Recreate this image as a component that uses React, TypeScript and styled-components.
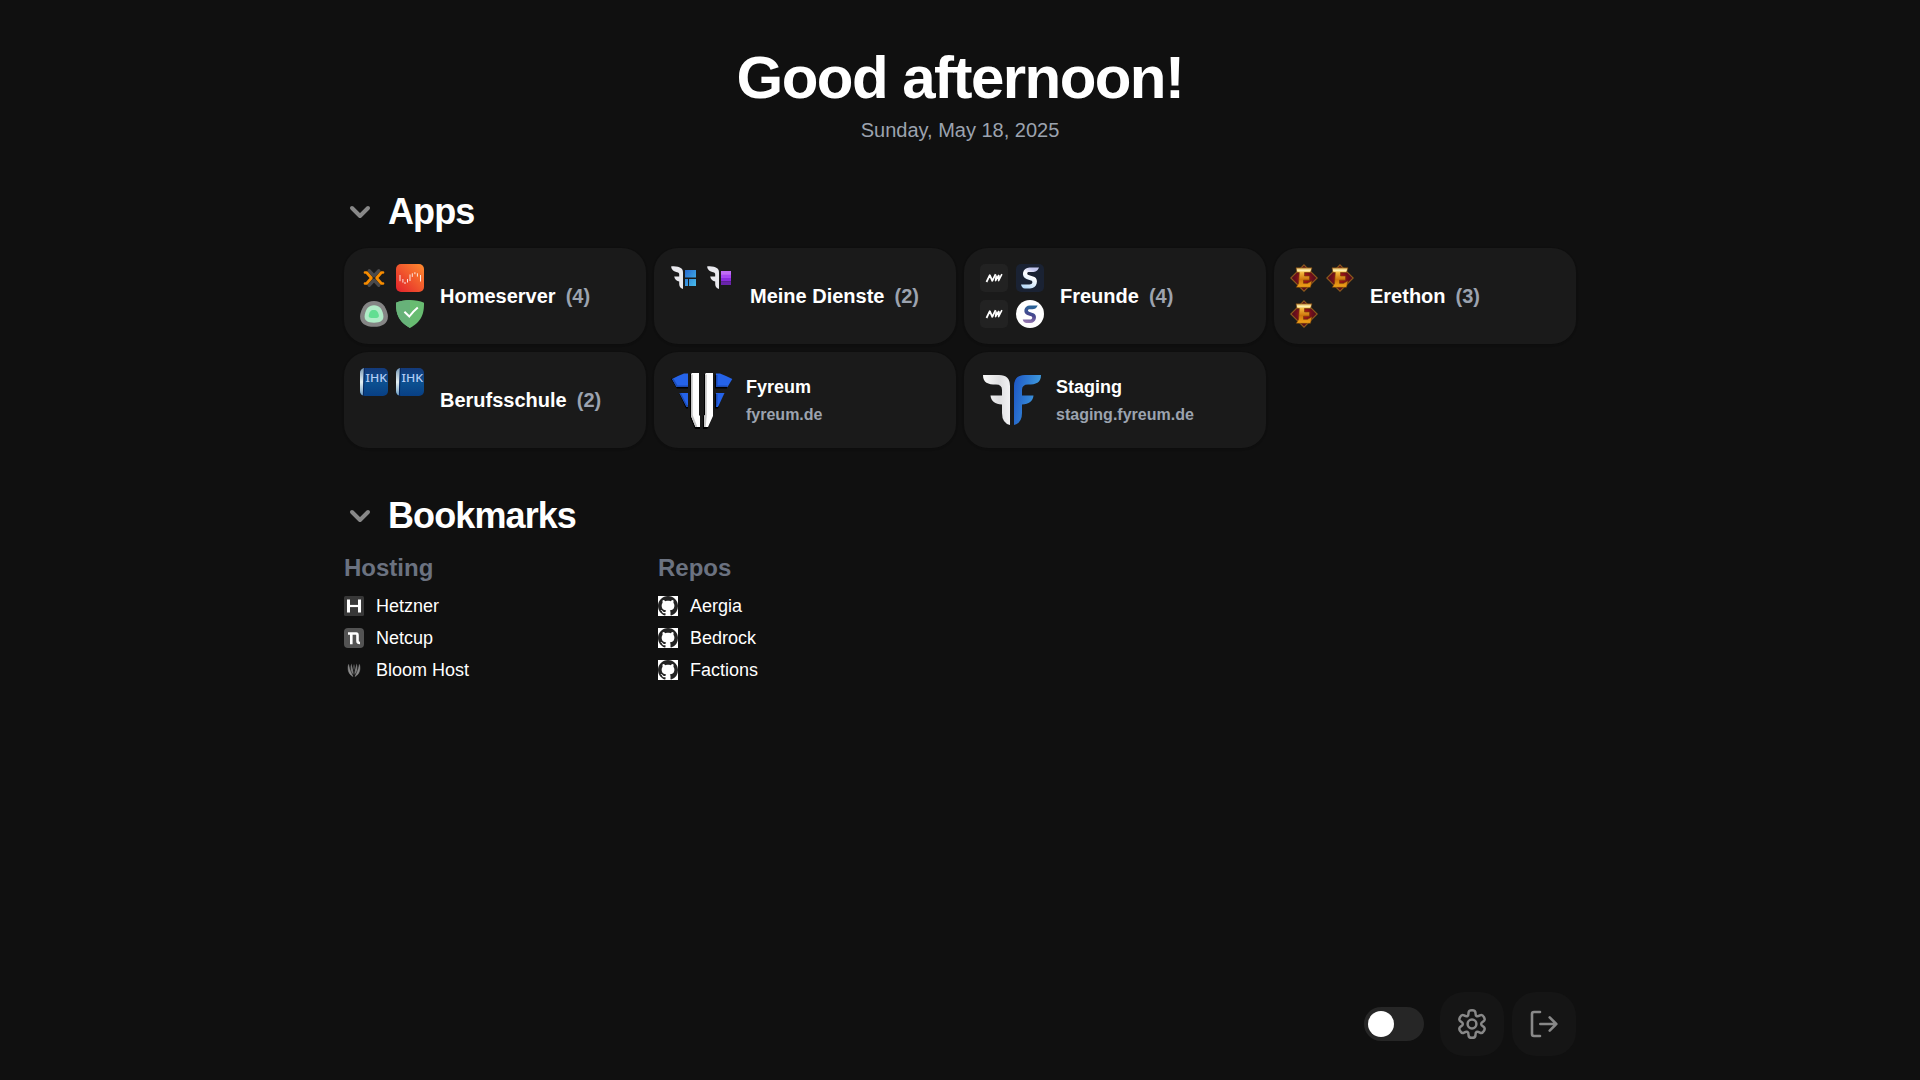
import React from "react";
import styled, { createGlobalStyle } from "styled-components";

const GlobalStyle = createGlobalStyle`
  *, *::before, *::after { box-sizing: border-box; }
  body {
    margin: 0;
    background: #101010;
    color: #ffffff;
    font-family: "Liberation Sans", Arial, sans-serif;
  }
  h1, h2, h3, p, ul { margin: 0; padding: 0; }
  svg { display: block; flex-shrink: 0; }
`;

const Page = styled.div`
  display: flex;
  flex-direction: column;
  width: 1280px;
  height: 1080px;
  margin: 0 auto;
  padding: 48px 24px 24px;
`;

const Header = styled.header`
  display: flex;
  flex-direction: column;
  align-items: center;
  gap: 8px;
`;

const Greeting = styled.h1`
  font-size: 60px;
  line-height: 60px;
  font-weight: 700;
  letter-spacing: -1.54px;
`;

const Today = styled.p`
  font-size: 20px;
  line-height: 28px;
  color: #9ca3af;
`;

const Section = styled.section<{ $top: number }>`
  margin-top: ${(p) => p.$top}px;
`;

const SectionTitle = styled.h2`
  display: flex;
  align-items: center;
  gap: 12px;
  height: 40px;
  font-size: 36px;
  line-height: 40px;
  font-weight: 700;
  letter-spacing: -0.9px;
`;

const CardGrid = styled.div`
  display: grid;
  grid-template-columns: repeat(4, 1fr);
  gap: 8px;
  margin-top: 16px;
`;

const Card = styled.div<{ $gap: number }>`
  display: flex;
  align-items: center;
  gap: ${(p) => p.$gap}px;
  height: 96px;
  padding: 16px;
  border-radius: 24px;
  background: #1a1a1a;
  box-shadow: 0 1px 3px rgba(0, 0, 0, 0.1), 0 1px 2px rgba(0, 0, 0, 0.1);
`;

const IconGrid = styled.div`
  display: grid;
  grid-template-columns: 28px 28px;
  grid-template-rows: 28px 28px;
  gap: 8px;
  width: 64px;
  height: 64px;
`;

const FolderName = styled.h3`
  display: flex;
  gap: 10px;
  font-size: 20px;
  line-height: 28px;
  font-weight: 700;
`;

const Count = styled.span`
  color: #9ca3af;
`;

const AppText = styled.div`
  display: flex;
  flex-direction: column;
  padding-top: 2px;
`;

const AppName = styled.h3`
  font-size: 18px;
  line-height: 28px;
  font-weight: 700;
`;

const AppHost = styled.p`
  font-size: 16px;
  line-height: 28px;
  font-weight: 700;
  color: #9ca3af;
`;

const BookmarkGrid = styled.div`
  display: grid;
  grid-template-columns: repeat(4, 1fr);
  gap: 24px;
  margin-top: 16px;
`;

const BookmarkTitle = styled.h3`
  font-size: 24px;
  line-height: 32px;
  font-weight: 700;
  color: #6b7280;
`;

const BookmarkList = styled.ul`
  display: flex;
  flex-direction: column;
  gap: 4px;
  margin-top: 8px;
  list-style: none;
`;

const Bookmark = styled.li`
  display: flex;
  align-items: center;
  gap: 12px;
  font-size: 18px;
  line-height: 28px;
`;

const Footer = styled.footer`
  display: flex;
  align-items: center;
  justify-content: flex-end;
  gap: 8px;
  margin-top: auto;
`;

const Toggle = styled.div`
  width: 60px;
  height: 34px;
  margin-right: 8px;
  padding: 4px;
  border-radius: 17px;
  background: #262626;
`;

const Knob = styled.div`
  width: 26px;
  height: 26px;
  border-radius: 50%;
  background: #ffffff;
`;

const RoundButton = styled.button`
  display: flex;
  align-items: center;
  justify-content: center;
  width: 64px;
  height: 64px;
  padding: 0;
  border: 0;
  border-radius: 24px;
  background: #151515;
  color: #888888;
`;

const ChevronBox = styled.span`
  display: flex;
  justify-content: center;
  width: 32px;
`;

const Chevron = () => (
  <ChevronBox>
    <svg width="22" height="14" viewBox="0 0 22 14" fill="none" stroke="#888" strokeWidth="4" strokeLinecap="round" strokeLinejoin="round">
      <path d="M3 3l8 8 8-8" />
    </svg>
  </ChevronBox>
);

const ProxmoxIcon = () => (
  <svg width="28" height="28" viewBox="0 0 28 28" fill="none" strokeWidth="3.2" strokeLinecap="round" strokeLinejoin="round">
    <path d="M9.200 6.600L14 11.800L18.800 6.600M9.200 21.400L14 16.200L18.800 21.400" stroke="#4a4a4c" />
    <path d="M5 8.500H6.600L11.400 14L6.600 19.500H5M23 8.500H21.400L16.600 14L21.400 19.500H23" stroke="#f78c00" strokeWidth="2.700" />
  </svg>
);

const UnraidIcon = () => (
  <svg width="28" height="28" viewBox="0 0 28 28">
    <defs>
      <linearGradient id="unraid" x1="0" y1="1" x2="1" y2="0">
        <stop offset="0" stopColor="#e2202b" />
        <stop offset="1" stopColor="#ff8c2f" />
      </linearGradient>
    </defs>
    <rect width="28" height="28" rx="5" fill="url(#unraid)" />
    <path d="M4 11v6.200M6.900 15v3.600M9 18v2M11.500 15v3.500M14 10.500v6.500M16.300 9.300v3.600M18.900 8.200v2M21.400 9.300v3.300M24.500 11v6.500" stroke="#fff" strokeWidth="1" opacity="0.85" />
  </svg>
);

const UptimeKumaIcon = () => (
  <svg width="28" height="28" viewBox="0 0 28 28">
    <path d="M14 1C22 1 25.500 6 27.500 13.500C29.500 21.500 24 26.800 14 26.800S-1.500 21.500.5 13.500C2.500 6 6 1 14 1Z" fill="#858585" />
    <path d="M14 5.300C19.500 5.300 22 9 23.200 14.500C24.500 20.500 20.500 22.700 14 22.700S3.500 20.500 4.800 14.500C6 9 8.500 5.300 14 5.300Z" fill="#b0ecc7" />
    <path d="M13.800 10C17 10 18 12 18.800 15C19.200 17.500 18 18 13.800 18S8.300 17.500 8.800 15C9.500 12 10.500 10 13.800 10Z" fill="#62de91" />
  </svg>
);

const AdGuardIcon = () => (
  <svg width="28" height="28" viewBox="0 0 28 28">
    <path d="M14 0C9 0 4 1 0 2.700C0 10 .2 20.500 14 28C27.800 20.500 28 10 28 2.700C24 1 19 0 14 0Z" fill="#68bc71" />
    <path d="M14 0C9 0 4 1 0 2.700C0 10 .2 20.500 14 28Z" fill="#67b279" />
    <path d="M8.400 11.700L13.300 16.500Q17 11.500 21.800 7.500" fill="none" stroke="#fff" strokeWidth="2" />
  </svg>
);

const WING = "M1 2.500C5 2 9 2.600 11.500 4.500C12.800 5.800 13 7 13 9V25C10.500 24.500 9.200 22.500 9.200 20V17.500C7 17 4.600 15.500 4.200 12.500H9.200V10.500C9.200 9 8.600 8.500 7 8.200C4 7.500 1.500 6 1 2.500Z";

const PanelsIcon = () => (
  <svg width="28" height="28" viewBox="0 0 28 28">
    <defs>
      <linearGradient id="panes" x1="0" y1="0" x2="1" y2="1">
        <stop offset="0" stopColor="#2569d0" />
        <stop offset="1" stopColor="#48bdec" />
      </linearGradient>
    </defs>
    <path d={WING} fill="#e9e9ee" />
    <path d="M15 6H26V13.400H15ZM15 15H18V22H15ZM19 15H26V22H19Z" fill="url(#panes)" />
  </svg>
);

const StackIcon = () => (
  <svg width="28" height="28" viewBox="0 0 28 28">
    <path d={WING} fill="#e9e9ee" />
    <path d="M15 7H25V11H15Z" fill="#c06cf5" />
    <path d="M15 10.700H25V14H15Z" fill="#a747f2" />
    <path d="M15 14H25V17.500H15Z" fill="#8b2bdc" />
    <path d="M15 17.500H25V21H15Z" fill="#6924ab" />
  </svg>
);

const NwIcon = () => (
  <svg width="28" height="28" viewBox="0 0 28 28">
    <rect width="28" height="28" rx="5" fill="#222" />
    <g fill="none" stroke="#fff" strokeLinejoin="round">
      <path d="M6.500 18L9.800 11.200L12.300 16.800L15.600 10.200" strokeWidth="1.800" />
      <path d="M16.200 11.500L15.600 16.600L18.900 10.800M18.900 11.500L18.600 16.600L21.900 10.200" strokeWidth="1.600" />
    </g>
  </svg>
);

const SCURVE = "M23 3.500C21.500 7 19.500 8 16.500 8H13C11 8 10.600 10.300 12.500 11L18.500 13C22.800 15 21.500 24.500 14 24.500H9C6.500 24.500 5.500 22.500 5 20.500H13.500C16.500 20.500 17.500 17.200 15 16.500L10.500 15C4.500 12.700 6.500 3.500 13.500 3.500Z";

const SDarkIcon = () => (
  <svg width="28" height="28" viewBox="0 0 28 28">
    <defs>
      <linearGradient id="sdark" x1="0" y1="1" x2=".5" y2="0">
        <stop offset="0" stopColor="#a9d2f7" />
        <stop offset=".7" stopColor="#ffffff" />
        <stop offset="1" stopColor="#c3c6ee" />
      </linearGradient>
    </defs>
    <rect width="28" height="28" rx="5" fill="#1a2233" />
    <path d={SCURVE} fill="url(#sdark)" />
  </svg>
);

const SLightIcon = () => (
  <svg width="28" height="28" viewBox="0 0 28 28">
    <defs>
      <linearGradient id="slight" x1="0" y1="1" x2=".2" y2="0">
        <stop offset="0" stopColor="#a783b8" />
        <stop offset=".5" stopColor="#49468e" />
        <stop offset="1" stopColor="#2b6397" />
      </linearGradient>
    </defs>
    <circle cx="14" cy="14" r="14" fill="#fff" />
    <path d={SCURVE} fill="url(#slight)" transform="translate(2.600 2.600) scale(.83)" />
  </svg>
);

const ErethonIcon = () => (
  <svg width="28" height="28" viewBox="0 0 28 28">
    <defs>
      <linearGradient id="gold" x1="0" y1="0" x2="0" y2="1">
        <stop offset="0" stopColor="#d9a446" />
        <stop offset=".13" stopColor="#fff3b4" />
        <stop offset=".25" stopColor="#f3b53a" />
        <stop offset=".6" stopColor="#cf760d" />
        <stop offset="1" stopColor="#f2a519" />
      </linearGradient>
      <radialGradient id="ruby">
        <stop offset="0" stopColor="#c81a0c" />
        <stop offset=".6" stopColor="#6d0f1c" />
        <stop offset="1" stopColor="#480d1d" />
      </radialGradient>
    </defs>
    <path d="M14 .8L27.200 14L14 27.200L.8 14Z" fill="url(#ruby)" stroke="#8f5a1c" strokeWidth="1.100" />
    <path d="M6 3.800H22L20.500 8.500H14.500V12H19.500V16.200H13.500V19.300H17.500L22 16.800L20.500 23.300H6.300L8.500 19.500L9.300 8.500H7Z" fill="url(#gold)" stroke="#6e3a0a" strokeWidth=".6" />
  </svg>
);

const IhkLabel = styled.text`
  font: 500 11.5px "Noto Sans", sans-serif;
  fill: #b4cdf5;
`;

const IhkIcon = () => (
  <svg width="28" height="28" viewBox="0 0 28 28">
    <defs>
      <linearGradient id="ihk" x1="0" y1="0" x2="0" y2="1">
        <stop offset="0" stopColor="#143a7a" />
        <stop offset=".55" stopColor="#0c5090" />
        <stop offset="1" stopColor="#083f84" />
      </linearGradient>
      <linearGradient id="spine" x1="0" y1="0" x2="0" y2="1">
        <stop offset="0" stopColor="#7c9bb5" />
        <stop offset=".5" stopColor="#e6f0f2" />
        <stop offset="1" stopColor="#6e9ec2" />
      </linearGradient>
      <clipPath id="ihkClip"><rect width="28" height="28" rx="5" /></clipPath>
    </defs>
    <g clipPath="url(#ihkClip)">
      <rect width="28" height="28" fill="url(#ihk)" />
      <path d="M0 0H4L3 28H0Z" fill="url(#spine)" />
      <path d="M4.300 0L3.300 28" stroke="#08255b" strokeWidth="1" />
      <IhkLabel x="5.500" y="13.500" textLength="21.500" lengthAdjust="spacingAndGlyphs">IHK</IhkLabel>
    </g>
  </svg>
);

const FyreumIcon = () => (
  <svg width="64" height="64" viewBox="0 0 64 64">
    <path d="M1 11L7 20.500H18V19H7L2.500 10ZM9 25L16 40.500H18V39ZM45 7V20.500H57V19H47V8ZM45 26V40.500H48L49 38H46V26ZM20 6V49L25 61H30V59H26L21 48V6ZM34 6V47L33 48V61H37L38.500 59H35V6Z" fill="#000" />
    <path d="M2 11L8 8L14 5.500H18V19H6.500Z" fill="#2563e9" />
    <path d="M62.300 11L56 8L50 5.500H46V19H57.500Z" fill="#2563e9" />
    <path d="M9.500 25H18V39H16.500Z" fill="#2563e9" />
    <path d="M54.500 25H46V39H48Z" fill="#2563e9" />
    <path d="M2 11L6.500 19H18V17.500H7.500L3.500 10.500ZM9.500 25L16.500 39H18V37H17L11 25ZM46 7H47.500V17.500H57.500V19H46ZM46 26H47.500V36L46 39Z" fill="#1d4bb3" />
    <path d="M21 5.500H22L22 5H29V47L30 48V59H25.500L21 48Z" fill="#fff" />
    <path d="M21 6.500H22.700V47L27 58V59H25.500L21 48Z" fill="#c5c5c5" />
    <path d="M35 5.500H36V5H43V48L38 59H34V48L35 47Z" fill="#fff" />
    <path d="M35 6.500H36.700V48L35.700 59H34V48L35 47Z" fill="#c5c5c5" />
  </svg>
);

const StagingIcon = () => (
  <svg width="64" height="64" viewBox="0 0 64 64">
    <defs>
      <linearGradient id="silver" x1="0" y1="0" x2="1" y2="0">
        <stop offset="0" stopColor="#fafafa" />
        <stop offset=".6" stopColor="#dedee0" />
        <stop offset="1" stopColor="#f2f2f4" />
      </linearGradient>
      <linearGradient id="azure" x1="0" y1="0" x2="1" y2=".3">
        <stop offset="0" stopColor="#1d55c4" />
        <stop offset="1" stopColor="#409edf" />
      </linearGradient>
    </defs>
    <path d="M3 7H19Q30 7 30 18V57Q22 55 22 45V36.500C15 36.500 11 33 10.500 27.500H22V22Q22 16.500 16 16.500C8 16.500 3 15 3 7Z" fill="url(#silver)" />
    <path d="M61 7H45Q34 7 34 18V57Q42 55 42 45V36.500C49 36.500 53 33 53.500 27.500H42V22Q42 16.500 48 16.500C56 16.500 61 15 61 7Z" fill="url(#azure)" />
  </svg>
);

const HetznerIcon = () => (
  <svg width="20" height="20" viewBox="0 0 20 20">
    <rect width="20" height="20" rx="1.500" fill="#383838" />
    <path d="M4.500 3.500V16.500M15.500 3.500V16.500" stroke="#fff" strokeWidth="3" />
    <path d="M4.600 10H15.400" stroke="#fff" strokeWidth="2.200" />
  </svg>
);

const NetcupIcon = () => (
  <svg width="20" height="20" viewBox="0 0 20 20">
    <rect width="20" height="20" rx="4" fill="#535353" />
    <path d="M4 5.500H12.300Q13.500 5.500 13.500 7.500V13Q13.500 15 16 15M7.300 6V16.300" fill="none" stroke="#fff" strokeWidth="2.600" />
  </svg>
);

const BloomIcon = () => (
  <svg width="20" height="20" viewBox="0 0 20 20">
    <path d="M4.600 4.500C3.200 9 4.500 14.500 9 16.500C7.500 13 5.500 10 4.600 4.500ZM15.400 4.500C16.800 9 15.500 14.500 11 16.500C12.500 13 14.500 10 15.400 4.500Z" fill="#8d8d8d" stroke="#8d8d8d" strokeWidth=".5" />
    <path d="M7.300 3.500C5.800 8 7 12.500 9.500 14.800C9.700 11 8.500 8 7.300 3.500ZM12.700 3.500C14.200 8 13 12.500 10.500 14.800C10.300 11 11.500 8 12.700 3.500Z" fill="#777" />
    <path d="M10 4C8.800 6 9 8 10 10.500C11 8 11.200 6 10 4Z" fill="#555" />
  </svg>
);

const GithubIcon = () => (
  <svg width="20" height="20" viewBox="0 0 16 16">
    <rect width="16" height="16" fill="#fff" />
    <path fill="#222" d="M8 0C3.580 0 0 3.580 0 8c0 3.540 2.290 6.530 5.470 7.590.4.070.55-.17.55-.38 0-.19-.01-.82-.01-1.490-2.010.37-2.530-.49-2.690-.94-.09-.23-.48-.94-.82-1.130-.28-.15-.68-.52-.01-.53.63-.01 1.080.58 1.230.82.72 1.210 1.870.87 2.330.66.07-.52.28-.87.51-1.070-1.780-.2-3.640-.89-3.640-3.950 0-.87.31-1.590.82-2.150-.08-.2-.36-1.020.08-2.120 0 0 .67-.21 2.200.82.64-.18 1.320-.27 2-.27s1.360.09 2 .27c1.530-1.040 2.200-.82 2.200-.82.44 1.100.16 1.920.08 2.120.51.56.82 1.270.82 2.150 0 3.070-1.870 3.750-3.650 3.950.29.25.54.73.54 1.480 0 1.070-.01 1.930-.01 2.200 0 .21.15.46.55.38A8.010 8.010 0 0 0 16 8c0-4.420-3.580-8-8-8Z" />
  </svg>
);

// Six-toothed outline: control points around the hub, joined by smooth curves.
const gearPath = (() => {
  const pts: [number, number][] = [];
  for (let k = 0; k < 6; k++) {
    for (const [offset, r] of [[-22, 9.2], [-14, 14.2], [14, 14.2], [22, 9.2]]) {
      const a = ((k * 60 - 90 + offset) * Math.PI) / 180;
      pts.push([16 + r * Math.cos(a), 16 + r * Math.sin(a)]);
    }
  }
  const mid = (i: number) => {
    const a = pts[i % pts.length];
    const b = pts[(i + 1) % pts.length];
    return `${((a[0] + b[0]) / 2).toFixed(2)} ${((a[1] + b[1]) / 2).toFixed(2)}`;
  };
  const start = mid(pts.length - 1);
  return `M${start}${pts.map((p, i) => `Q${p[0].toFixed(2)} ${p[1].toFixed(2)} ${mid(i)}`).join("")}Z`;
})();

const GearIcon = () => (
  <svg width="32" height="32" viewBox="0 0 32 32" fill="none" stroke="currentColor" strokeWidth="2.500" strokeLinecap="round" strokeLinejoin="round">
    <path d={gearPath} />
    <circle cx="16" cy="16" r="4.400" />
  </svg>
);

const ExitIcon = () => (
  <svg width="32" height="32" viewBox="0 0 32 32" fill="none" stroke="currentColor" strokeWidth="2.600" strokeLinecap="round" strokeLinejoin="round">
    <path d="M12 4H6Q4 4 4 6V26Q4 28 6 28H12M12.300 16H28.300M21.700 9.400L28.300 16L21.700 22.600" />
  </svg>
);

type FolderItem = { name: string; icons: React.FC[] };

const folders: FolderItem[] = [
  { name: "Homeserver", icons: [ProxmoxIcon, UnraidIcon, UptimeKumaIcon, AdGuardIcon] },
  { name: "Meine Dienste", icons: [PanelsIcon, StackIcon] },
  { name: "Freunde", icons: [NwIcon, SDarkIcon, NwIcon, SLightIcon] },
  { name: "Erethon", icons: [ErethonIcon, ErethonIcon, ErethonIcon] },
  { name: "Berufsschule", icons: [IhkIcon, IhkIcon] },
];

const apps = [
  { name: "Fyreum", host: "fyreum.de", Icon: FyreumIcon },
  { name: "Staging", host: "staging.fyreum.de", Icon: StagingIcon },
];

const bookmarks = [
  {
    title: "Hosting",
    items: [
      { name: "Hetzner", Icon: HetznerIcon },
      { name: "Netcup", Icon: NetcupIcon },
      { name: "Bloom Host", Icon: BloomIcon },
    ],
  },
  {
    title: "Repos",
    items: [
      { name: "Aergia", Icon: GithubIcon },
      { name: "Bedrock", Icon: GithubIcon },
      { name: "Factions", Icon: GithubIcon },
    ],
  },
];

export default function App() {
  return (
    <>
      <GlobalStyle />
      <Page>
        <Header>
          <Greeting>Good afternoon!</Greeting>
          <Today>Sunday, May 18, 2025</Today>
        </Header>
        <Section $top={48}>
          <SectionTitle><Chevron />Apps</SectionTitle>
          <CardGrid>
            {folders.map((f) => (
              <Card key={f.name} $gap={16}>
                <IconGrid>{f.icons.map((Icon, i) => <Icon key={i} />)}</IconGrid>
                <FolderName>{f.name}<Count>({f.icons.length})</Count></FolderName>
              </Card>
            ))}
            {apps.map(({ name, host, Icon }) => (
              <Card key={name} $gap={12}>
                <Icon />
                <AppText>
                  <AppName>{name}</AppName>
                  <AppHost>{host}</AppHost>
                </AppText>
              </Card>
            ))}
          </CardGrid>
        </Section>
        <Section $top={48}>
          <SectionTitle><Chevron />Bookmarks</SectionTitle>
          <BookmarkGrid>
            {bookmarks.map((b) => (
              <div key={b.title}>
                <BookmarkTitle>{b.title}</BookmarkTitle>
                <BookmarkList>
                  {b.items.map(({ name, Icon }) => (
                    <Bookmark key={name}><Icon />{name}</Bookmark>
                  ))}
                </BookmarkList>
              </div>
            ))}
          </BookmarkGrid>
        </Section>
        <Footer>
          <Toggle><Knob /></Toggle>
          <RoundButton aria-label="Settings"><GearIcon /></RoundButton>
          <RoundButton aria-label="Log out"><ExitIcon /></RoundButton>
        </Footer>
      </Page>
    </>
  );
}
